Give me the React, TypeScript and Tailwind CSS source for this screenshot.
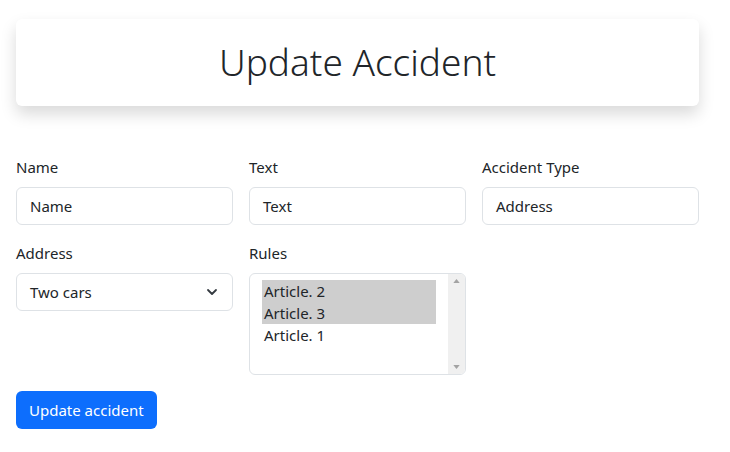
import React from "react";

const font = { fontFamily: '"Segoe UI", "Noto Sans", "Open Sans", sans-serif' };

function Field({ label, children }: { label: string; children: React.ReactNode }) {
  return (
    <div className="flex flex-col">
      <label className="mb-2 text-[15px] leading-6 text-[#212529]">{label}</label>
      {children}
    </div>
  );
}

function Input({ value }: { value: string }) {
  return (
    <div className="h-[38px] rounded-[6px] border border-[#dee2e6] bg-white pl-[13px] flex items-center text-[15px] text-[#212529]">
      {value}
    </div>
  );
}

export default function App() {
  return (
    <div className="bg-white min-h-[452px] w-[730px] text-[#212529]" style={font}>
      <div className="pl-4 pr-[31px] pt-[19px]">
        <div className="h-[87px] rounded-[6px] bg-white shadow-[0_8px_16px_rgba(0,0,0,0.15)] flex items-center justify-center">
          <h1 className="text-[37px] font-light leading-[48px] text-[#212529] -mt-[2px]">Update Accident</h1>
        </div>
        <div className="mt-[49px] grid grid-cols-3 gap-x-4 gap-y-4">
          <Field label="Name">
            <Input value="Name" />
          </Field>
          <Field label="Text">
            <Input value="Text" />
          </Field>
          <Field label="Accident Type">
            <Input value="Address" />
          </Field>
          <Field label="Address">
            <div className="h-[38px] rounded-[6px] border border-[#dee2e6] bg-white pl-[13px] pr-[12px] flex items-center justify-between text-[15px] text-[#212529]">
              <span>Two cars</span>
              <svg width="16" height="16" viewBox="0 0 16 16" fill="none" stroke="#343a40" strokeWidth="1.8" strokeLinecap="round" strokeLinejoin="round">
                <path d="M4 6l4 4 4-4" />
              </svg>
            </div>
          </Field>
          <Field label="Rules">
            <div className="h-[102px] rounded-[6px] border border-[#dee2e6] bg-white flex overflow-hidden">
              <div className="flex-1 pl-3 pt-[6px] pr-[12px] text-[15px] leading-[22px]">
                <div className="bg-[#cecece] px-[2px]">Article. 2</div>
                <div className="bg-[#cecece] px-[2px]">Article. 3</div>
                <div className="px-[2px]">Article. 1</div>
              </div>
              <div className="w-[17px] bg-[#f0f0f0] flex flex-col justify-between items-center py-[5px]">
                <svg width="7" height="4" viewBox="0 0 8 5"><path d="M0 5L4 0L8 5Z" fill="#a3a3a3" /></svg>
                <svg width="7" height="4" viewBox="0 0 8 5"><path d="M0 0L4 5L8 0Z" fill="#a3a3a3" /></svg>
              </div>
            </div>
          </Field>
        </div>
        <button className="mt-4 h-[38px] rounded-[6px] bg-[#0d6efd] px-[13px] text-[15px] text-white">
          Update accident
        </button>
      </div>
    </div>
  );
}
